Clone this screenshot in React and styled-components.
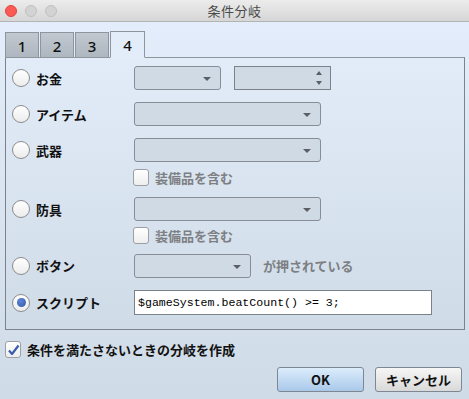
import React from 'react';
import styled, { createGlobalStyle } from 'styled-components';

const GlobalStyle = createGlobalStyle`
  html, body {
    margin: 0;
    padding: 0;
    background: #cfdbe6;
  }
  body {
    font-family: "Noto Sans CJK JP", "Noto Sans", sans-serif;
  }
`;

const Window = styled.div`
  width: 469px;
  height: 399px;
  display: flex;
  flex-direction: column;
  background: linear-gradient(#e4eefc, #cfdbe6);
  overflow: hidden;
`;

const TitleBar = styled.div`
  height: 21px;
  flex: none;
  position: relative;
  display: flex;
  align-items: center;
  justify-content: center;
  background: linear-gradient(#ececec, #d6d6d6);
  border-bottom: 1px solid #b4b4b4;
  font-size: 13px;
  color: #4a4a4a;
  letter-spacing: 0.5px;
`;

const Lights = styled.div`
  position: absolute;
  left: 5px;
  top: 5px;
  display: flex;
  gap: 8px;
`;

const Light = styled.span`
  width: 12px;
  height: 12px;
  box-sizing: border-box;
  border-radius: 50%;
  background: ${p => (p.$red ? '#fc5b55' : '#d3d3d3')};
  border: 1px solid ${p => (p.$red ? '#de4440' : '#c0c0c0')};
`;

const Body = styled.div`
  flex: 1;
  padding: 9px 5px 0 5px;
  display: flex;
  flex-direction: column;
`;

const Tabs = styled.div`
  display: flex;
  height: 26px;
  position: relative;
  z-index: 1;
`;

const Tab = styled.div`
  width: ${p => (p.$active ? '35px' : '34px')};
  box-sizing: border-box;
  margin-right: 1px;
  display: flex;
  align-items: center;
  justify-content: center;
  font-family: "Noto Sans", sans-serif;
  font-size: 15px;
  font-weight: 500;
  color: #111;
  border: 1px solid #8e959d;
  border-bottom: ${p => (p.$active ? '1px solid #e2ecf9' : '1px solid #8e959d')};
  background: ${p => (p.$active ? '#e3edfa' : 'linear-gradient(#c1c8d0, #aeb6bf)')};
  margin-top: ${p => (p.$active ? '0' : '1px')};
  padding-top: 1px;
  height: ${p => (p.$active ? '27px' : '26px')};
`;

const Panel = styled.div`
  height: 273px;
  box-sizing: border-box;
  width: 460px;
  border: 1px solid #7c828b;
  border-top-color: #8e959d;
  background: linear-gradient(#e2ecf9, #cfdbe7);
  padding: 8px 0 0 6px;
  display: flex;
  flex-direction: column;
`;

const Row = styled.div`
  display: flex;
  align-items: center;
  height: ${p => p.$h || 24}px;
  margin-top: ${p => p.$mt || 0}px;
`;

const Choice = styled.label`
  width: 122px;
  flex: none;
  display: flex;
  align-items: center;
  gap: 6px;
  font-size: 13px;
  font-weight: 700;
  color: #111;
`;

const Radio = styled.span`
  width: 18px;
  height: 18px;
  box-sizing: border-box;
  border-radius: 50%;
  border: 1px solid #8c8c8c;
  background: linear-gradient(#ffffff, #ececec);
  display: flex;
  align-items: center;
  justify-content: center;
  &::after {
    content: '';
    display: ${p => (p.$checked ? 'block' : 'none')};
    width: 9px;
    height: 9px;
    border-radius: 50%;
    background: radial-gradient(circle at 40% 35%, #5c86d6, #3358aa);
  }
`;

const Combo = styled.div`
  width: ${p => p.$w}px;
  height: 24px;
  box-sizing: border-box;
  border: 1px solid #878d96;
  border-radius: 3px;
  background: #d0dae5;
  position: relative;
  flex: none;
  &::after {
    content: '';
    position: absolute;
    right: 9px;
    top: 10px;
    border-left: 4px solid transparent;
    border-right: 4px solid transparent;
    border-top: 4px solid #5a5f66;
  }
`;

const Spinner = styled.div`
  width: 97px;
  height: 24px;
  box-sizing: border-box;
  margin-left: 13px;
  border: 1px solid #7d8189;
  background: #d0dae5;
  position: relative;
  &::before, &::after {
    content: '';
    position: absolute;
    right: 8px;
    border-left: 3.5px solid transparent;
    border-right: 3.5px solid transparent;
  }
  &::before {
    top: 4px;
    border-bottom: 4px solid #5a5f66;
  }
  &::after {
    bottom: 4px;
    border-top: 4px solid #5a5f66;
  }
`;

const Check = styled.span`
  width: 16px;
  height: 17px;
  box-sizing: border-box;
  border: 1px solid #9c9fa4;
  border-radius: 3px;
  background: linear-gradient(#ffffff, #eeeeee);
  flex: none;
  display: flex;
  align-items: center;
  justify-content: center;
`;

const SubCheck = styled.div`
  display: flex;
  align-items: center;
  gap: 6px;
  margin-left: 121px;
  font-size: 13px;
  font-weight: 700;
  color: #7d7f83;
`;

const Hint = styled.span`
  margin-left: 12px;
  font-size: 13px;
  font-weight: 700;
  color: #7d7f83;
`;

const ScriptInput = styled.div`
  width: 298px;
  height: 25px;
  box-sizing: border-box;
  border: 1px solid #7c828b;
  background: #fff;
  display: flex;
  align-items: center;
  padding-left: 3px;
  font-family: "Liberation Mono", monospace;
  font-size: 11.6px;
  color: #000;
  white-space: pre;
`;

const Footer = styled.div`
  display: flex;
  flex-direction: column;
  padding-top: 10px;
`;

const FooterCheck = styled.label`
  display: flex;
  align-items: center;
  gap: 6px;
  font-size: 13px;
  font-weight: 700;
  color: #111;
`;

const Buttons = styled.div`
  display: flex;
  justify-content: flex-end;
  gap: 11px;
  margin-top: 8px;
  padding-right: 2px;
`;

const Button = styled.button`
  width: 87px;
  height: 25px;
  box-sizing: border-box;
  border: 1px solid #7f8792;
  border-radius: 3px;
  font-family: "Noto Sans CJK JP", "Noto Sans", sans-serif;
  font-size: 13px;
  font-weight: 700;
  color: #111;
  padding: 0;
  background: ${p =>
    p.$primary
      ? 'linear-gradient(#dcecfb, #a9c9ea)'
      : 'linear-gradient(#f6f6f6, #d9d9d9)'};
`;

const CheckMark = () => (
  <svg width="13" height="12" viewBox="0 0 13 12">
    <path d="M2 6.5 L5 10 L11.5 1.5" fill="none" stroke="#3a5db0" strokeWidth="2.2" strokeLinejoin="round" />
  </svg>
);

export default function App() {
  return (
    <>
      <GlobalStyle />
      <Window>
        <TitleBar>
          <Lights>
            <Light $red />
            <Light />
            <Light />
          </Lights>
          条件分岐
        </TitleBar>
        <Body>
          <Tabs>
            <Tab>1</Tab>
            <Tab>2</Tab>
            <Tab>3</Tab>
            <Tab $active>4</Tab>
          </Tabs>
          <Panel>
            <Row>
              <Choice><Radio />お金</Choice>
              <Combo $w={87} />
              <Spinner />
            </Row>
            <Row $mt={12}>
              <Choice><Radio />アイテム</Choice>
              <Combo $w={187} />
            </Row>
            <Row $mt={12}>
              <Choice><Radio />武器</Choice>
              <Combo $w={187} />
            </Row>
            <Row $h={17} $mt={7}>
              <SubCheck><Check />装備品を含む</SubCheck>
            </Row>
            <Row $mt={11}>
              <Choice><Radio />防具</Choice>
              <Combo $w={187} />
            </Row>
            <Row $h={17} $mt={6}>
              <SubCheck><Check />装備品を含む</SubCheck>
            </Row>
            <Row $h={25} $mt={9}>
              <Choice><Radio />ボタン</Choice>
              <Combo $w={117} />
              <Hint>が押されている</Hint>
            </Row>
            <Row $h={25} $mt={12}>
              <Choice><Radio $checked />スクリプト</Choice>
              <ScriptInput>$gameSystem.beatCount() &gt;= 3;</ScriptInput>
            </Row>
          </Panel>
          <Footer>
            <FooterCheck>
              <Check><CheckMark /></Check>
              条件を満たさないときの分岐を作成
            </FooterCheck>
            <Buttons>
              <Button $primary>OK</Button>
              <Button>キャンセル</Button>
            </Buttons>
          </Footer>
        </Body>
      </Window>
    </>
  );
}
